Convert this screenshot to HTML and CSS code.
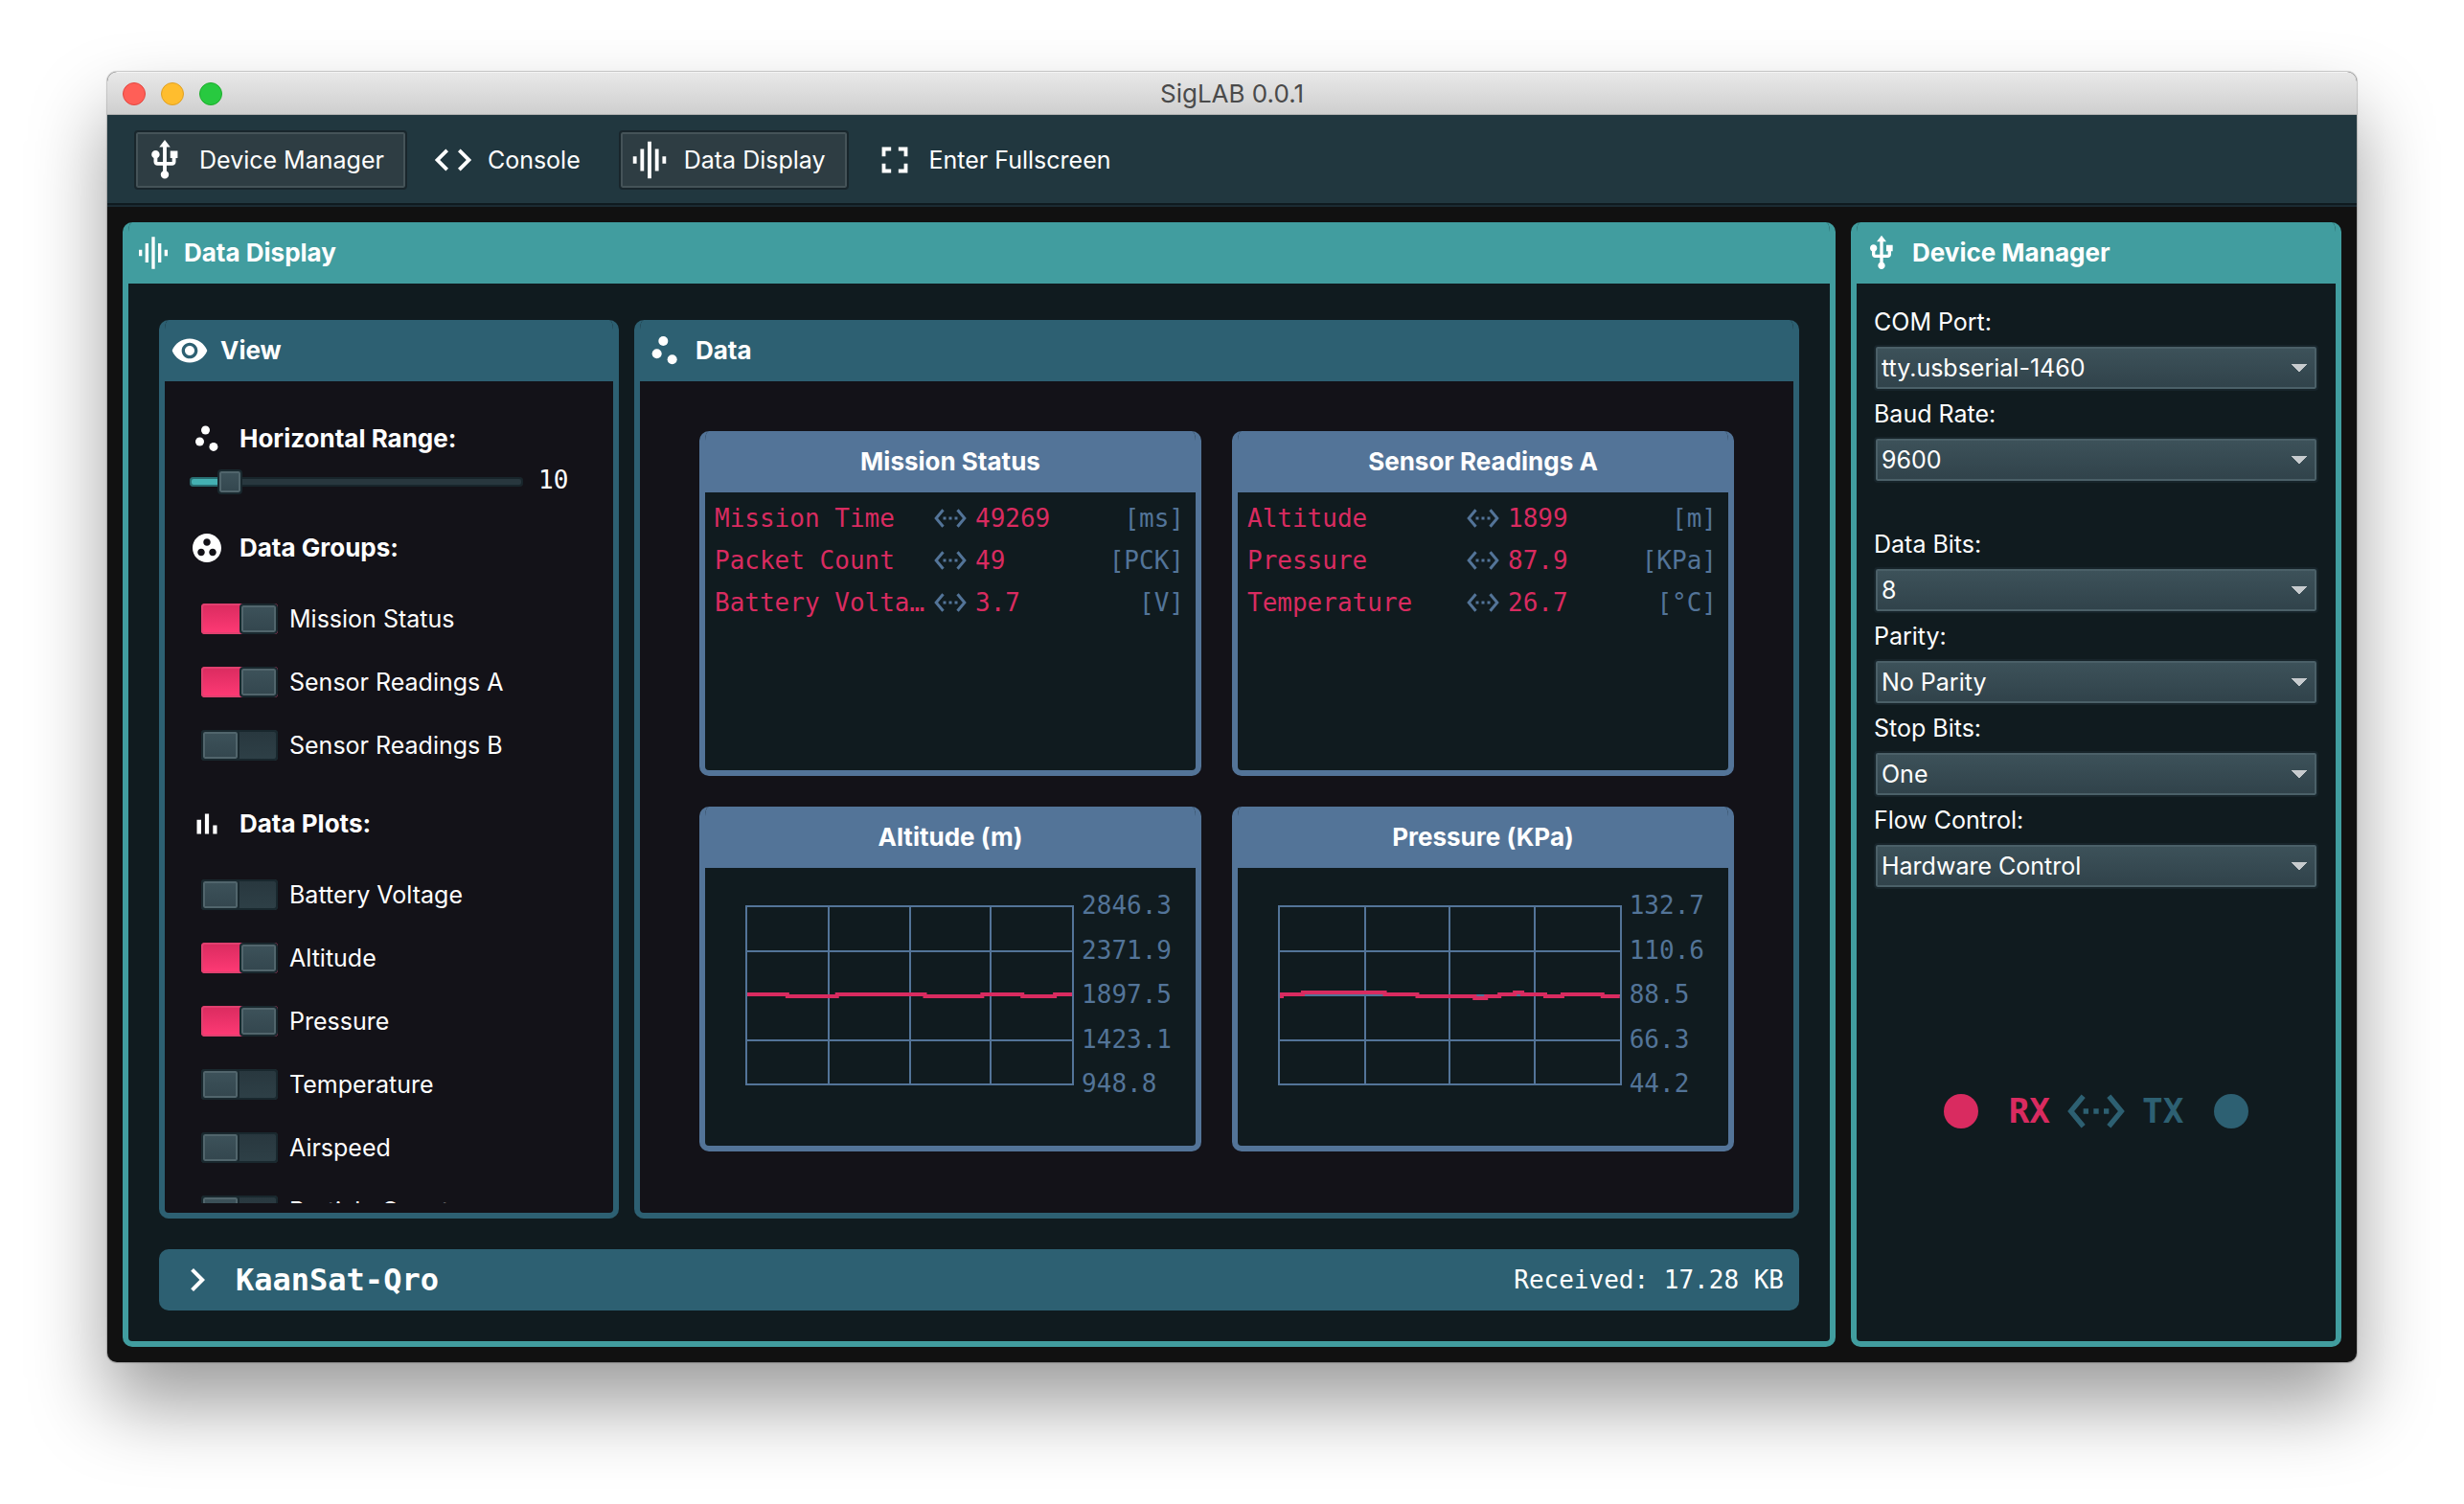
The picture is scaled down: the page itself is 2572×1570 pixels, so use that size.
FILE: index.html
```html
<!DOCTYPE html>
<html lang="en">
<head>
<meta charset="utf-8">
<title>SigLAB 0.0.1</title>
<link rel="stylesheet" href="styles.css">
</head>
<body>
<svg class="sprite" aria-hidden="true">
  <symbol id="i-usb" viewBox="0 0 24 24"><path d="M15 7v4h1v2h-3V5h2l-3-4-3 4h2v8H8v-2.07c.7-.37 1.2-1.08 1.2-1.93 0-1.21-.99-2.2-2.2-2.2-1.21 0-2.2.99-2.2 2.2 0 .85.5 1.56 1.2 1.93V13c0 1.11.89 2 2 2h3v3.05c-.71.37-1.2 1.1-1.2 1.95 0 1.22.99 2.2 2.2 2.2 1.21 0 2.2-.98 2.2-2.2 0-.85-.49-1.58-1.2-1.95V15h3c1.11 0 2-.89 2-2v-2h1V7h-4z"/></symbol>
  <symbol id="i-code" viewBox="0 0 24 24"><path d="M9.4 16.6L4.8 12l4.6-4.6L8 6l-6 6 6 6 1.4-1.4zm5.2 0l4.6-4.6-4.6-4.6L16 6l6 6-6 6-1.4-1.4z"/></symbol>
  <symbol id="i-eq" viewBox="0 0 24 24"><path d="M7 18h2V6H7v12zm4 4h2V2h-2v20zm-8-8h2v-4H3v4zm12 4h2V6h-2v12zm4-8v4h2v-4h-2z"/></symbol>
  <symbol id="i-full" viewBox="0 0 24 24"><path d="M7 14H5v5h5v-2H7v-3zm-2-4h2V7h3V5H5v5zm12 7h-3v2h5v-5h-2v3zM14 5v2h3v3h2V5h-5z"/></symbol>
  <symbol id="i-eye" viewBox="0 0 24 24"><path d="M12 4.5C7 4.5 2.73 7.61 1 12c1.73 4.39 6 7.5 11 7.5s9.27-3.11 11-7.5c-1.73-4.39-6-7.5-11-7.5zM12 17c-2.76 0-5-2.24-5-5s2.24-5 5-5 5 2.24 5 5-2.24 5-5 5zm0-8c-1.66 0-3 1.34-3 3s1.34 3 3 3 3-1.34 3-3-1.34-3-3-3z"/></symbol>
  <symbol id="i-scatter" viewBox="0 0 24 24"><circle cx="7" cy="14" r="3"/><circle cx="11" cy="6" r="3"/><circle cx="16.6" cy="17.6" r="3"/></symbol>
  <symbol id="i-group" viewBox="0 0 24 24"><path d="M12 2C6.48 2 2 6.48 2 12s4.48 10 10 10 10-4.48 10-10S17.52 2 12 2zM8 17.5c-1.38 0-2.5-1.12-2.5-2.5s1.12-2.5 2.5-2.5 2.5 1.12 2.5 2.5-1.12 2.5-2.5 2.5zM9.5 8c0-1.38 1.12-2.5 2.5-2.5s2.5 1.12 2.5 2.5-1.12 2.5-2.5 2.5S9.5 9.38 9.5 8zm6.5 9.5c-1.38 0-2.5-1.12-2.5-2.5s1.12-2.5 2.5-2.5 2.5 1.12 2.5 2.5-1.12 2.5-2.5 2.5z"/></symbol>
  <symbol id="i-bars" viewBox="0 0 24 24"><path d="M5 9.2h3V19H5zM10.6 5h2.8v14h-2.8zm5.6 8H19v6h-2.8z"/></symbol>
  <symbol id="i-link" viewBox="0 0 24 24"><path d="M7.77 6.76L6.23 5.48.82 12l5.41 6.52 1.54-1.28L3.42 12l4.35-5.24zM7 13h2v-2H7v2zm10-2h-2v2h2v-2zm-6 2h2v-2h-2v2zm6.77-7.52l-1.54 1.28L20.58 12l-4.35 5.24 1.54 1.28L23.18 12l-5.41-6.52z"/></symbol>
  <symbol id="i-chevron" viewBox="0 0 24 24"><path d="M10 6L8.59 7.41 13.17 12l-4.58 4.59L10 18l6-6z"/></symbol>
</svg>

<div class="window">
  <header class="titlebar">
    <div class="lights">
      <button class="light light-close" aria-label="Close"></button>
      <button class="light light-min" aria-label="Minimize"></button>
      <button class="light light-zoom" aria-label="Zoom"></button>
    </div>
    <h1 class="title">SigLAB 0.0.1</h1>
  </header>

  <nav class="toolbar">
    <button class="tool is-on" aria-pressed="true"><svg class="icon icon-lg"><use href="#i-usb"/></svg>Device Manager</button>
    <button class="tool" aria-pressed="false"><svg class="icon icon-lg"><use href="#i-code"/></svg>Console</button>
    <button class="tool is-on" aria-pressed="true"><svg class="icon icon-lg"><use href="#i-eq"/></svg>Data Display</button>
    <button class="tool" aria-pressed="false"><svg class="icon icon-lg"><use href="#i-full"/></svg>Enter Fullscreen</button>
  </nav>

  <main class="workspace">
    <section class="panel panel-teal display">
      <h2 class="panel-head"><svg class="icon icon-md"><use href="#i-eq"/></svg>Data Display</h2>
      <div class="display-body">
        <div class="columns">
          <section class="panel panel-blue view">
            <h3 class="panel-head"><svg class="icon icon-md"><use href="#i-eye"/></svg>View</h3>
            <div class="view-body">
              <div class="view-scroll">
                <label class="group-head" for="range"><svg class="icon"><use href="#i-scatter"/></svg>Horizontal Range:</label>
                <div class="range-row">
                  <input class="range" id="range" type="range" min="1" max="100" value="10">
                  <output class="range-value mono" for="range">10</output>
                </div>
                <fieldset class="group">
                  <legend class="group-head"><svg class="icon"><use href="#i-group"/></svg>Data Groups:</legend>
                  <label class="switch-row"><input class="switch" type="checkbox" checked>Mission Status</label>
                  <label class="switch-row"><input class="switch" type="checkbox" checked>Sensor Readings A</label>
                  <label class="switch-row"><input class="switch" type="checkbox">Sensor Readings B</label>
                </fieldset>
                <fieldset class="group">
                  <legend class="group-head"><svg class="icon"><use href="#i-bars"/></svg>Data Plots:</legend>
                  <label class="switch-row"><input class="switch" type="checkbox">Battery Voltage</label>
                  <label class="switch-row"><input class="switch" type="checkbox" checked>Altitude</label>
                  <label class="switch-row"><input class="switch" type="checkbox" checked>Pressure</label>
                  <label class="switch-row"><input class="switch" type="checkbox">Temperature</label>
                  <label class="switch-row"><input class="switch" type="checkbox">Airspeed</label>
                  <label class="switch-row"><input class="switch" type="checkbox">Particle Count</label>
                </fieldset>
              </div>
            </div>
          </section>

          <section class="panel panel-blue data">
            <h3 class="panel-head"><svg class="icon icon-md"><use href="#i-scatter"/></svg>Data</h3>
            <div class="cards">
              <article class="panel panel-slate">
                <h4 class="panel-head">Mission Status</h4>
                <div class="card-body">
                  <table class="readings mono">
                    <tr><th scope="row">Mission Time</th><td class="link"><svg class="icon"><use href="#i-link"/></svg></td><td>49269</td><td class="unit">[ms]</td></tr>
                    <tr><th scope="row">Packet Count</th><td class="link"><svg class="icon"><use href="#i-link"/></svg></td><td>49</td><td class="unit">[PCK]</td></tr>
                    <tr><th scope="row">Battery Voltage</th><td class="link"><svg class="icon"><use href="#i-link"/></svg></td><td>3.7</td><td class="unit">[V]</td></tr>
                  </table>
                </div>
              </article>
              <article class="panel panel-slate">
                <h4 class="panel-head">Sensor Readings A</h4>
                <div class="card-body">
                  <table class="readings mono">
                    <tr><th scope="row">Altitude</th><td class="link"><svg class="icon"><use href="#i-link"/></svg></td><td>1899</td><td class="unit">[m]</td></tr>
                    <tr><th scope="row">Pressure</th><td class="link"><svg class="icon"><use href="#i-link"/></svg></td><td>87.9</td><td class="unit">[KPa]</td></tr>
                    <tr><th scope="row">Temperature</th><td class="link"><svg class="icon"><use href="#i-link"/></svg></td><td>26.7</td><td class="unit">[°C]</td></tr>
                  </table>
                </div>
              </article>
              <article class="panel panel-slate">
                <h4 class="panel-head">Altitude (m)</h4>
                <div class="card-body plot">
                  <svg class="chart" viewBox="0 0 344 188" preserveAspectRatio="none">
                    <path class="grid" d="M1 1H343V187H1ZM87 1V187M172 1V187M257 1V187M1 48H343M1 94H343M1 141H343"/>
                    <path class="trace" d="M2 93H44V95H96V93H188V95H248V93H290V95H324V93H342"/>
                  </svg>
                  <div class="scale mono"><span>2846.3</span><span>2371.9</span><span>1897.5</span><span>1423.1</span><span>948.8</span></div>
                </div>
              </article>
              <article class="panel panel-slate">
                <h4 class="panel-head">Pressure (KPa)</h4>
                <div class="card-body plot">
                  <svg class="chart" viewBox="0 0 360 188" preserveAspectRatio="none">
                    <path class="grid" d="M1 1H359V187H1ZM91 1V187M180 1V187M269 1V187M1 48H359M1 94H359M1 141H359"/>
                    <path class="trace" d="M2 95H4V93H26V91H112V93H146V95H206V97H218V95H232V93H248V91H256V93H280V95H298V93H340V95H358"/>
                  </svg>
                  <div class="scale mono"><span>132.7</span><span>110.6</span><span>88.5</span><span>66.3</span><span>44.2</span></div>
                </div>
              </article>
            </div>
          </section>
        </div>

        <footer class="status mono">
          <svg class="icon icon-xl"><use href="#i-chevron"/></svg>
          <strong class="project">KaanSat-Qro</strong>
          <span>Received: 17.28 KB</span>
        </footer>
      </div>
    </section>

    <aside class="panel panel-teal device">
      <h2 class="panel-head"><svg class="icon icon-md"><use href="#i-usb"/></svg>Device Manager</h2>
      <div class="device-body">
        <label class="field-label" for="port">COM Port:</label>
        <select class="field" id="port"><option>tty.usbserial-1460</option></select>
        <label class="field-label" for="baud">Baud Rate:</label>
        <select class="field field-last" id="baud"><option>9600</option></select>
        <label class="field-label" for="bits">Data Bits:</label>
        <select class="field" id="bits"><option>8</option></select>
        <label class="field-label" for="parity">Parity:</label>
        <select class="field" id="parity"><option>No Parity</option></select>
        <label class="field-label" for="stop">Stop Bits:</label>
        <select class="field" id="stop"><option>One</option></select>
        <label class="field-label" for="flow">Flow Control:</label>
        <select class="field" id="flow"><option>Hardware Control</option></select>
        <div class="traffic mono">
          <span class="led rx"></span>
          <span class="rx">RX</span>
          <svg class="icon icon-link"><use href="#i-link"/></svg>
          <span>TX</span>
          <span class="led"></span>
        </div>
      </div>
    </aside>
  </main>
</div>
</body>
</html>
```
FILE: styles.css
```css
:root {
  --teal: #419d9f;
  --blue: #2d6072;
  --slate: #537498;
  --pink: #d92b60;
  --ink: #101b1f;
  --night: #131218;
}

*, *::before { box-sizing: border-box; }

body {
  margin: 0;
  height: 100vh;
  padding: 75px 112px 148px;
  display: flex;
  background: #fff;
  color: #fff;
  font: 25px/32px Inter, "Liberation Sans", sans-serif;
}

button, select, input { font: inherit; color: inherit; margin: 0; }
h1, h2, h3, h4 { margin: 0; font-size: 26px; }

.sprite { display: none; }
.mono { font-family: "DejaVu Sans Mono", "Liberation Mono", monospace; font-size: 26px; }

.icon { width: 36px; height: 36px; flex: none; fill: currentColor; }
.icon-md { width: 40px; height: 40px; }
.icon-lg { width: 46px; height: 46px; }
.icon-xl { width: 48px; height: 48px; }

/* Window frame */
.window {
  flex: 1;
  min-width: 0;
  display: flex;
  flex-direction: column;
  overflow: hidden;
  background: #111;
  border-radius: 10px;
  box-shadow: 0 0 1px 1px rgba(0, 0, 0, .2), 0 44px 80px rgba(0, 0, 0, .39);
}

.titlebar {
  height: 45px;
  padding: 0 16px;
  display: grid;
  grid-template-columns: 1fr auto 1fr;
  align-items: center;
  background: linear-gradient(#e8e8e8, #cfcfcf);
  border-top: 1px solid #f4f4f4;
  border-bottom: 1px solid #b2b2b2;
}
.lights { display: flex; gap: 16px; }
.light { width: 24px; height: 24px; padding: 0; border: 1px solid #e2463f; border-radius: 50%; background: #ff5f57; }
.light-min { background: #ffbd2e; border-color: #dfa023; }
.light-zoom { background: #28c940; border-color: #1dad2b; }
.title { font-weight: 400; color: #4a4a4a; }

.toolbar {
  display: flex;
  gap: 16px;
  height: 96px;
  padding: 16px 28px;
  background: #21373f;
  border-bottom: 2px solid #1b2a32;
  box-shadow: inset 0 -2px #0f1a1f;
}
.tool {
  display: flex;
  align-items: center;
  gap: 13px;
  height: 62px;
  padding: 0 22px 0 7px;
  background: none;
  border: 2px solid transparent;
  border-radius: 4px;
}
.tool.is-on {
  background: #2e3d43;
  border-color: #19262c;
  box-shadow: inset 0 0 0 2px #455358;
}

.workspace { flex: 1; min-height: 0; display: flex; gap: 16px; padding: 16px; }

/* Titled panels */
.panel {
  min-width: 0;
  min-height: 0;
  display: flex;
  flex-direction: column;
  overflow: hidden;
  border-radius: 10px;
  border: 6px solid var(--edge);
  border-top: 0;
  background: var(--ink);
}
.panel-teal { --edge: var(--teal); }
.panel-blue { --edge: var(--blue); background: var(--night); }
.panel-slate { --edge: var(--slate); }
.panel-head {
  flex: none;
  display: flex;
  align-items: center;
  gap: 12px;
  height: 64px;
  padding: 0 6px;
  background: var(--edge);
  font-weight: 700;
}
.panel-slate .panel-head { justify-content: center; }

.display { flex: 1; }
.display-body { flex: 1; min-height: 0; display: flex; flex-direction: column; gap: 32px; padding: 38px 32px 32px; }
.columns { flex: 1; min-height: 0; display: flex; gap: 16px; }

/* View options */
.view { flex: 0 0 480px; }
.view-body { flex: 1; min-height: 0; padding: 0 26px 10px; }
.view-scroll { height: 100%; padding-top: 42px; overflow: hidden; }
.group-head { display: flex; align-items: center; gap: 16px; height: 36px; padding: 0; font-size: 26px; font-weight: 700; }
.group { margin: 48px 0 0; padding: 0; border: 0; min-width: 0; }
.group .group-head { margin-bottom: 40px; }
.range-row { display: flex; align-items: center; gap: 16px; height: 34px; margin-top: 10px; }
.range-value { align-self: flex-start; line-height: 30px; }
.range-row + .group { margin-top: 34px; }
.switch-row { display: flex; align-items: center; gap: 12px; height: 32px; padding-left: 12px; }
.switch-row + .switch-row { margin-top: 34px; }

.range {
  appearance: none;
  width: 348px;
  height: 10px;
  border-radius: 4px;
  background: linear-gradient(90deg, #44b0b2 34px, #28373e 34px);
  box-shadow: inset 0 0 0 2px rgba(0, 10, 14, .4);
}
.range::-webkit-slider-thumb {
  appearance: none;
  width: 26px;
  height: 26px;
  border: 2px solid #19282e;
  border-radius: 4px;
  background: linear-gradient(#3d525a, #33464e);
  box-shadow: inset 0 0 0 2px #51656c;
}

.switch {
  appearance: none;
  flex: none;
  display: flex;
  width: 80px;
  height: 32px;
  border-radius: 4px;
  background: linear-gradient(#28373e, #2e4047);
  box-shadow: inset 0 0 0 2px #19282e;
}
.switch::before {
  content: "";
  width: 40px;
  border: 2px solid #19282e;
  border-radius: 4px;
  background: linear-gradient(#3d525a, #33464e);
  box-shadow: inset 0 0 0 2px #51656c;
}
.switch:checked {
  justify-content: flex-end;
  background: linear-gradient(#d92b5f, #ff3a75);
  box-shadow: inset 0 0 0 2px #e0406f;
}

/* Data cards */
.data { flex: 1; }
.cards {
  flex: 1;
  min-height: 0;
  display: grid;
  grid-template: 1fr 1fr / 1fr 1fr;
  gap: 32px;
  padding: 52px 62px 64px;
}
.card-body { flex: 1; min-height: 0; padding: 5px 12px 5px 10px; }

.readings { width: 100%; table-layout: fixed; border-collapse: collapse; color: var(--pink); }
.readings tr { height: 44px; }
.readings th, .readings td { padding: 0; font-weight: 400; text-align: left; white-space: nowrap; }
.readings th { width: 222px; overflow: hidden; text-overflow: ellipsis; }
.readings .link { width: 50px; padding-left: 6px; color: var(--slate); }
.readings .link .icon { display: block; }
.readings .unit { text-align: right; color: var(--slate); }

.plot { display: flex; align-items: flex-start; gap: 8px; padding: 24px 25px 0 42px; }
.chart { flex: 1; min-width: 0; height: 188px; margin-top: 15px; fill: none; overflow: visible; }
.chart path { vector-effect: non-scaling-stroke; }
.grid { stroke: var(--slate); stroke-width: 2px; shape-rendering: crispEdges; }
.trace { stroke: var(--pink); stroke-width: 4px; }
.scale { display: flex; flex-direction: column; justify-content: space-between; height: 216px; line-height: 30px; color: var(--slate); }

.status { flex: none; display: flex; align-items: center; gap: 16px; height: 64px; padding: 0 16px; border-radius: 10px; background: var(--blue); }
.project { flex: 1; font-size: 32px; }

/* Device settings */
.device { flex: 0 0 512px; }
.device-body { flex: 1; min-height: 0; display: flex; flex-direction: column; padding: 16px 18px 8px; }
.field-label { height: 48px; line-height: 48px; }
.field {
  appearance: none;
  height: 48px;
  padding: 0 6px;
  border: 2px solid #17242a;
  border-radius: 4px;
  box-shadow: inset 0 0 0 2px #4b6068;
  background:
    conic-gradient(from -45deg at 50% 100%, #c7cbce 90deg, transparent 0) right 10px center / 16px 8px no-repeat,
    linear-gradient(#3d525a, #30424a);
}
.field-last { margin-bottom: 40px; }

.traffic { flex: 1; display: flex; align-items: center; justify-content: center; gap: 16px; font-size: 36px; font-weight: 700; color: var(--blue); }
.rx { color: var(--pink); }
.led { width: 36px; height: 36px; margin-left: 16px; border-radius: 50%; background: currentColor; }
.led.rx { margin: 0 16px 0 0; }
.icon-link { width: 64px; height: 64px; }
```
